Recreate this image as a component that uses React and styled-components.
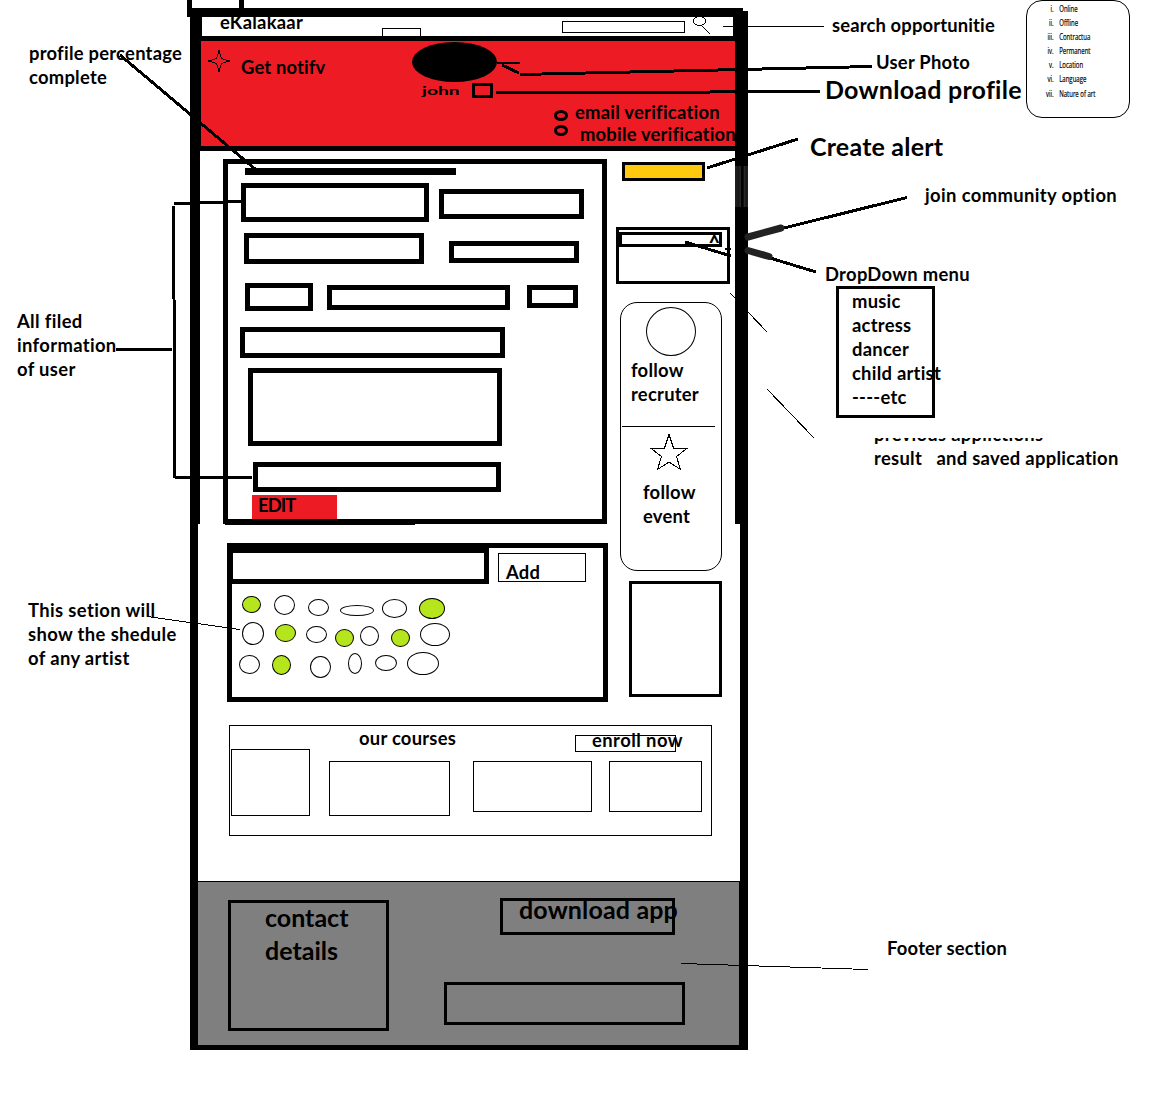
import React from "react";
import styled, { createGlobalStyle } from "styled-components";

const Global = createGlobalStyle`
  * { box-sizing: border-box; }
  body { margin: 0; background: #fff; color: #000; font-family: Lato, "Liberation Sans", sans-serif; }
`;

const Page = styled.div`
  position: relative;
  display: grid;
  grid-template-columns: 187px 561px 404px;
  width: 1152px;
  height: 1112px;
  overflow: hidden;
`;

const Label = styled.div`
  font-weight: 700;
  font-size: ${(p) => p.$size || (p.$large ? 25 : 18.4)}px;
  line-height: ${(p) => p.$line || (p.$large ? 32 : 24)}px;
  letter-spacing: ${(p) => p.$track ?? 0.25}px;
  font-variant-ligatures: none;
  width: ${(p) => (p.$w ? p.$w + "px" : "auto")};
  margin: ${(p) => p.$top || 0}px 0 0 ${(p) => p.$left || 0}px;
  white-space: pre;
  flex: none;
`;

const Box = styled.div`
  flex: none;
  width: ${(p) => p.$w}px;
  height: ${(p) => p.$h}px;
  margin: ${(p) => p.$top || 0}px 0 0 ${(p) => p.$left || 0}px;
  border: ${(p) => p.$line || 1}px solid #000;
`;
const Field = styled(Box)`
  border-width: 5px;
`;

const Notes = styled.aside`
  display: flex;
  flex-direction: column;
`;
const NotesRow = styled.div`
  display: flex;
  height: 118px;
`;
const NotesGroup = styled.div`
  width: 278px;
`;
const FilterCard = styled.ol`
  width: 104px;
  height: 118px;
  margin: 0;
  padding: 1px 0 0;
  border: 1px solid #000;
  border-radius: 16px;
  list-style: none;
`;
const FilterItem = styled.li`
  display: flex;
  width: 150px;
  height: 14.1px;
  font-family: "Open Sans", sans-serif;
  font-size: 8.6px;
  line-height: 14px;
  -webkit-text-stroke: 0.2px #000;
  transform: scaleX(0.7);
  transform-origin: 0 0;
  white-space: nowrap;
`;
const Numeral = styled.span`
  width: 38px;
  margin-right: 8px;
  text-align: right;
`;
const MenuBox = styled(Box)`
  padding-left: 13px;
`;
const Cropped = styled.div`
  display: flex;
  align-items: flex-end;
  height: ${(p) => p.$h}px;
  margin-top: ${(p) => p.$top}px;
  overflow: hidden;
`;

const Tab = styled.div`
  width: 57px;
  height: 8px;
  border: solid #000;
  border-width: 0 5px;
`;
const TopBar = styled.div`
  width: 556px;
  height: 9px;
  background: #000;
`;
const Frame = styled.div`
  display: grid;
  grid-template-columns: 10px 535px 13px;
  height: 1028px;
  margin-left: 3px;
`;
const Rail = styled.div`
  display: flex;
  flex-direction: column;
  align-items: ${(p) => p.$side};
`;
const RailPart = styled.div`
  width: ${(p) => p.$w}px;
  height: ${(p) => p.$h}px;
  background: ${(p) => (p.$worn ? "linear-gradient(90deg, #222, #161616 30%, #2a2a2a 42%, #000 48%, #080808 64%, #2c2c2c 72%, #151515 85%, #222)" : "#000")};
`;
const FrameBottom = styled.div`
  height: 5px;
  width: 558px;
  margin-left: 3px;
  background: #000;
`;
const Content = styled.main`
  display: flex;
  flex-direction: column;
`;

const Header = styled.header`
  display: flex;
  height: 19px;
  border: solid #000;
  border-width: 0 2px;
  overflow: hidden;
`;
const TabOutline = styled(Box)`
  border-bottom: 0;
`;
const SearchIcon = styled.svg`
  margin-left: 7px;
`;

const Banner = styled.section`
  display: flex;
  height: 115px;
  border: solid #000;
  border-width: 5px 0 5px 1px;
  background: #ed1c24;
  overflow: hidden;
`;
const Notify = styled.div`
  display: flex;
  flex: none;
  width: 211px;
  padding: 9px 0 0 7px;
`;
const User = styled.div`
  flex: none;
  width: 142px;
`;
const Avatar = styled.div`
  width: 85px;
  height: 40px;
  margin-top: 1px;
  border-radius: 50%;
  background: #000;
`;
const UserRow = styled.div`
  display: flex;
  padding-left: 10px;
`;
const UserName = styled.div`
  width: 50px;
  height: 15px;
  font-size: 10.5px;
  font-weight: 700;
  line-height: 18px;
  transform: scaleX(1.83);
  transform-origin: 0 0;
`;
const Verification = styled.div`
  flex: none;
  padding-top: 59px;
`;
const VerifyRow = styled.div`
  display: flex;
  height: 22px;
`;
const Ring = styled.div`
  flex: none;
  width: 14px;
  height: 11px;
  margin-top: ${(p) => p.$top}px;
  border: 3px solid #000;
  border-radius: 50%;
`;

const Body = styled.div`
  display: flex;
  gap: 9px;
  height: 551px;
  padding: 8px 0 0 23px;
`;
const MainColumn = styled.div`
  width: 384px;
`;
const ProfileCard = styled.section`
  height: 365px;
  border: 5px solid #000;
`;
const Progress = styled.div`
  width: 211px;
  height: 7px;
  margin: 4px 0 0 17px;
  background: #000;
`;
const FieldRow = styled.div`
  display: flex;
  align-items: flex-start;
  margin-top: ${(p) => p.$top}px;
`;
const EditButton = styled.div`
  width: 85px;
  height: 24px;
  margin: 3px 0 0 24px;
  padding-left: 6px;
  background: #ed1c24;
`;
const ScheduleCard = styled.section`
  width: 381px;
  height: 159px;
  margin: 19px 0 0 4px;
  border: 5px solid #000;
`;
const ScheduleTop = styled.div`
  display: flex;
  height: 47px;
`;
const DotRow = styled.div`
  display: flex;
  height: ${(p) => p.$h}px;
`;
const Dot = styled.div`
  flex: none;
  width: ${(p) => p.$w}px;
  height: ${(p) => p.$h}px;
  margin: ${(p) => p.$top}px 0 0 ${(p) => p.$left}px;
  border: 1px solid #000;
  border-radius: 50%;
  background: ${(p) => (p.$on ? "#b5e61d" : "#fff")};
`;

const SideColumn = styled.div`
  width: 119px;
`;
const AlertButton = styled(Box)`
  background: #ffc90e;
`;
const Select = styled(Box)`
  display: flex;
  justify-content: flex-end;
`;
const Caret = styled.span`
  font-size: 20px;
  font-weight: 900;
  line-height: 20px;
  margin: -3px -1px 0 0;
`;
const FollowCard = styled(Box)`
  border-radius: 17px;
`;
const Round = styled(Box)`
  border-radius: 50%;
`;
const Divider = styled.div`
  width: 93px;
  height: 1px;
  margin: 20px 0 0 1px;
  background: #000;
`;
const StarIcon = styled.svg`
  display: block;
  margin: 7px 0 0 29px;
`;

const Courses = styled.section`
  width: 483px;
  height: 111px;
  margin: 23px 0 0 29px;
  border: 1px solid #000;
`;
const CoursesHead = styled.div`
  display: flex;
  height: 23px;
`;
const EnrollButton = styled(Box)`
  padding-left: 16px;
`;
const CourseRow = styled.div`
  display: flex;
`;

const Footer = styled.footer`
  display: flex;
  height: 164px;
  margin: 45px -5px 0 -2px;
  border: solid #000;
  border-width: 1px 1px 0 0;
  background: #7f7f7f;
`;
const Contact = styled(Box)`
  padding-left: 34px;
`;
const FooterRight = styled.div`
  margin-left: 55px;
`;

const Connectors = styled.svg`
  position: absolute;
  left: 0;
  top: 0;
  pointer-events: none;
`;

const filters = [
  ["i.", "Online"],
  ["ii.", "Offline"],
  ["iii.", "Contractua"],
  ["iv.", "Permanent"],
  ["v.", "Location"],
  ["vi.", "Language"],
  ["vii.", "Nature of art"],
];

// Each mark: left gap, top offset, width, height, booked
const schedule = [
  { h: 27, dots: [[10, 1, 19, 17, 1], [13, 0, 21, 20], [13, 4, 21, 17], [11, 10, 34, 11], [8, 4, 25, 19], [12, 3, 26, 21, 1]] },
  { h: 30, dots: [[10, 0, 22, 23], [11, 2, 21, 18, 1], [10, 4, 21, 17], [8, 7, 19, 18, 1], [6, 4, 19, 20], [12, 7, 19, 18, 1], [10, 1, 30, 23]] },
  { h: 27, dots: [[7, 3, 21, 19], [12, 3, 19, 20, 1], [19, 4, 21, 22], [17, 1, 14, 21], [13, 3, 22, 16], [10, 0, 32, 23]] },
];

export default function App() {
  return (
    <Page>
      <Global />
      <Notes>
        <Label $top={41} $left={29}>{"profile percentage\ncomplete"}</Label>
        <Label $top={220} $left={17} $track={0.35}>{"All filed\ninformation\nof user"}</Label>
        <Label $top={217} $left={28} $track={0.38}>{"This setion will\nshow the shedule\nof any artist"}</Label>
      </Notes>

      <div>
        <Tab />
        <TopBar />
        <Frame>
          <Rail $side="flex-start">
            <RailPart $w={10} $h={507} />
            <RailPart $w={8} $h={521} />
          </Rail>
          <Content>
            <Header>
              <Label $top={-7} $left={18} $w={83}>eKalakaar</Label>
              <TabOutline $w={39} $h={8} $top={11} $left={79} />
              <Box $w={123} $h={12} $top={4} $left={141} />
              <SearchIcon width="20" height="19" viewBox="0 0 20 19" fill="none" stroke="#000" shapeRendering="crispEdges">
                <ellipse cx="7.5" cy="4" rx="6" ry="4.5" />
                <path d="M9 8 18 17" />
              </SearchIcon>
            </Header>
            <Banner>
              <Notify>
                <svg width="22" height="22" viewBox="0 0 22 22" fill="none" stroke="#000" shapeRendering="crispEdges">
                  <path d="M11 .5 13.5 8.5 21.5 11 13.5 13.5 11 21.5 8.5 13.5.5 11 8.5 8.5Z" />
                </svg>
                <Label $top={5} $left={11} $track={0.15}>Get notifv</Label>
              </Notify>
              <User>
                <Avatar />
                <UserRow>
                  <UserName>john</UserName>
                  <Box $w={21} $h={15} $top={1} $line={3} />
                </UserRow>
              </User>
              <Verification>
                <VerifyRow>
                  <Ring $top={10} />
                  <Label $left={7} $track={0.25}>email verification</Label>
                </VerifyRow>
                <VerifyRow>
                  <Ring $top={3} />
                  <Label $left={12} $track={0.2}>mobile verification</Label>
                </VerifyRow>
              </Verification>
            </Banner>

            <Body>
              <MainColumn>
                <ProfileCard>
                  <Progress />
                  <FieldRow $top={8}>
                    <Field $w={188} $h={39} $left={13} />
                    <Field $w={145} $h={30} $left={10} $top={6} />
                  </FieldRow>
                  <FieldRow $top={11}>
                    <Field $w={180} $h={31} $left={16} />
                    <Field $w={130} $h={22} $left={25} $top={8} />
                  </FieldRow>
                  <FieldRow $top={19}>
                    <Field $w={68} $h={28} $left={17} />
                    <Field $w={183} $h={25} $left={14} $top={2} />
                    <Field $w={51} $h={23} $left={17} $top={2} />
                  </FieldRow>
                  <FieldRow $top={16}><Field $w={265} $h={31} $left={12} /></FieldRow>
                  <FieldRow $top={10}><Field $w={254} $h={78} $left={20} /></FieldRow>
                  <FieldRow $top={16}><Field $w={248} $h={30} $left={25} /></FieldRow>
                  <EditButton><Label $line={20} $size={18.4} $track={-0.9}>EDIT</Label></EditButton>
                </ProfileCard>
                <ScheduleCard>
                  <ScheduleTop>
                    <Field $w={261} $h={36} $left={-4} />
                    <Box $w={88} $h={29} $left={9} $top={5}><Label $top={6} $left={7}>Add</Label></Box>
                  </ScheduleTop>
                  {schedule.map((row, i) => (
                    <DotRow key={i} $h={row.h}>
                      {row.dots.map(([left, top, w, h, on], j) => (
                        <Dot key={j} $left={left} $top={top} $w={w} $h={h} $on={on} />
                      ))}
                    </DotRow>
                  ))}
                </ScheduleCard>
              </MainColumn>
              <SideColumn>
                <AlertButton $w={83} $h={19} $top={3} $left={6} $line={3} />
                <Box $w={114} $h={57} $top={46} $line={3}>
                  <Select $w={103} $h={15} $top={2} $line={3}><Caret>^</Caret></Select>
                </Box>
                <FollowCard $w={102} $h={269} $top={18} $left={4}>
                  <Round $w={50} $h={49} $top={4} $left={25} />
                  <Label $top={2} $left={10}>{"follow\nrecruter"}</Label>
                  <Divider />
                  <StarIcon width="38" height="37" viewBox="0 0 38 37" fill="none" stroke="#000" shapeRendering="crispEdges">
                    <path d="M19 .5 23.5 14H37.5L26.5 22.5 30.5 35.5 19 28 7.5 35.5 11.5 22.5.5 14H14.5Z" />
                  </StarIcon>
                  <Label $top={9} $left={22}>{"follow\nevent"}</Label>
                </FollowCard>
                <Box $w={93} $h={116} $top={10} $left={13} $line={3} />
              </SideColumn>
            </Body>

            <Courses>
              <CoursesHead>
                <Label $left={129} $w={97}>our courses</Label>
                <EnrollButton $w={101} $h={17} $top={9} $left={119}>
                  <Label $top={-8} $track={0.45}>enroll now</Label>
                </EnrollButton>
              </CoursesHead>
              <CourseRow>
                <Box $w={79} $h={67} $left={1} />
                <Box $w={121} $h={55} $left={19} $top={12} />
                <Box $w={119} $h={51} $left={23} $top={12} />
                <Box $w={93} $h={51} $left={17} $top={12} />
              </CourseRow>
            </Courses>

            <Footer>
              <Contact $w={161} $h={131} $top={18} $left={30} $line={3}>
                <Label $large $line={33} $top={-2} $track={0}>{"contact\ndetails"}</Label>
              </Contact>
              <FooterRight>
                <Box $w={175} $h={37} $top={16} $left={56} $line={3}>
                  <Label $large $top={-8} $left={16} $track={0.15}>download app</Label>
                </Box>
                <Box $w={241} $h={43} $top={47} $line={3} />
              </FooterRight>
            </Footer>
          </Content>
          <Rail $side="flex-end">
            <RailPart $w={13} $h={149} />
            <RailPart $w={13} $h={41} $worn />
            <RailPart $w={13} $h={317} />
            <RailPart $w={8} $h={521} />
          </Rail>
        </Frame>
        <FrameBottom />
      </div>

      <Notes>
        <NotesRow>
          <NotesGroup>
            <Label $top={13} $left={84} $track={0.15}>search opportunitie</Label>
            <Label $top={13} $left={128}>User Photo</Label>
            <Label $large $top={-1} $left={77}>Download profile</Label>
          </NotesGroup>
          <FilterCard>
            {filters.map(([n, name]) => (
              <FilterItem key={n}><Numeral>{n}</Numeral>{name}</FilterItem>
            ))}
          </FilterCard>
        </NotesRow>
        <Label $large $top={12} $left={62} $track={0.2}>Create alert</Label>
        <Label $top={21} $left={177} $track={0.38}>join community option</Label>
        <Label $top={55} $left={77} $track={0.3}>DropDown menu</Label>
        <MenuBox $w={99} $h={132} $left={88} $line={3}>
          <Label>{"music\nactress\ndancer\nchild artist\n----etc"}</Label>
        </MenuBox>
        <Cropped $h={8} $top={20}>
          <Label $left={126} $track={0.3}>previous applictions</Label>
        </Cropped>
        <Label $left={126} $track={0.3}>{"result   and saved application"}</Label>
        <Label $top={466} $left={139} $track={0.2}>Footer section</Label>
      </Notes>

      <Connectors width="1152" height="1112" fill="none" stroke="#000" shapeRendering="crispEdges">
        <path d="M743 11H748V17H743ZM225 524H415V525H225Z" fill="#000" stroke="none" />
        <g strokeWidth="3">
          <path d="M120 55 255 169M174 203.5 241 201.5M173.5 206 175 478M175 477.5H252M116 349.5H172" />
          <path d="M502 65 519 73M520 74.5 872 66.5M496 93 820 91.5M707 168 798 139" />
          <path d="M685 242 731 256M784 228 907 197.5M770 258 816 272" />
        </g>
        <path strokeWidth="2" d="M497 63H520M725 249H731" />
        <path d="M723 26.5H824M730 293 735 298M748 312 767 332M767 389 814 438M147 616.5 240 629.5M681 963.5 868 969.5" />
        <path d="M748 237 781 228M748 250.5 769 256.5" stroke="#222" strokeWidth="7" strokeLinecap="round" shapeRendering="auto" />
      </Connectors>
    </Page>
  );
}
